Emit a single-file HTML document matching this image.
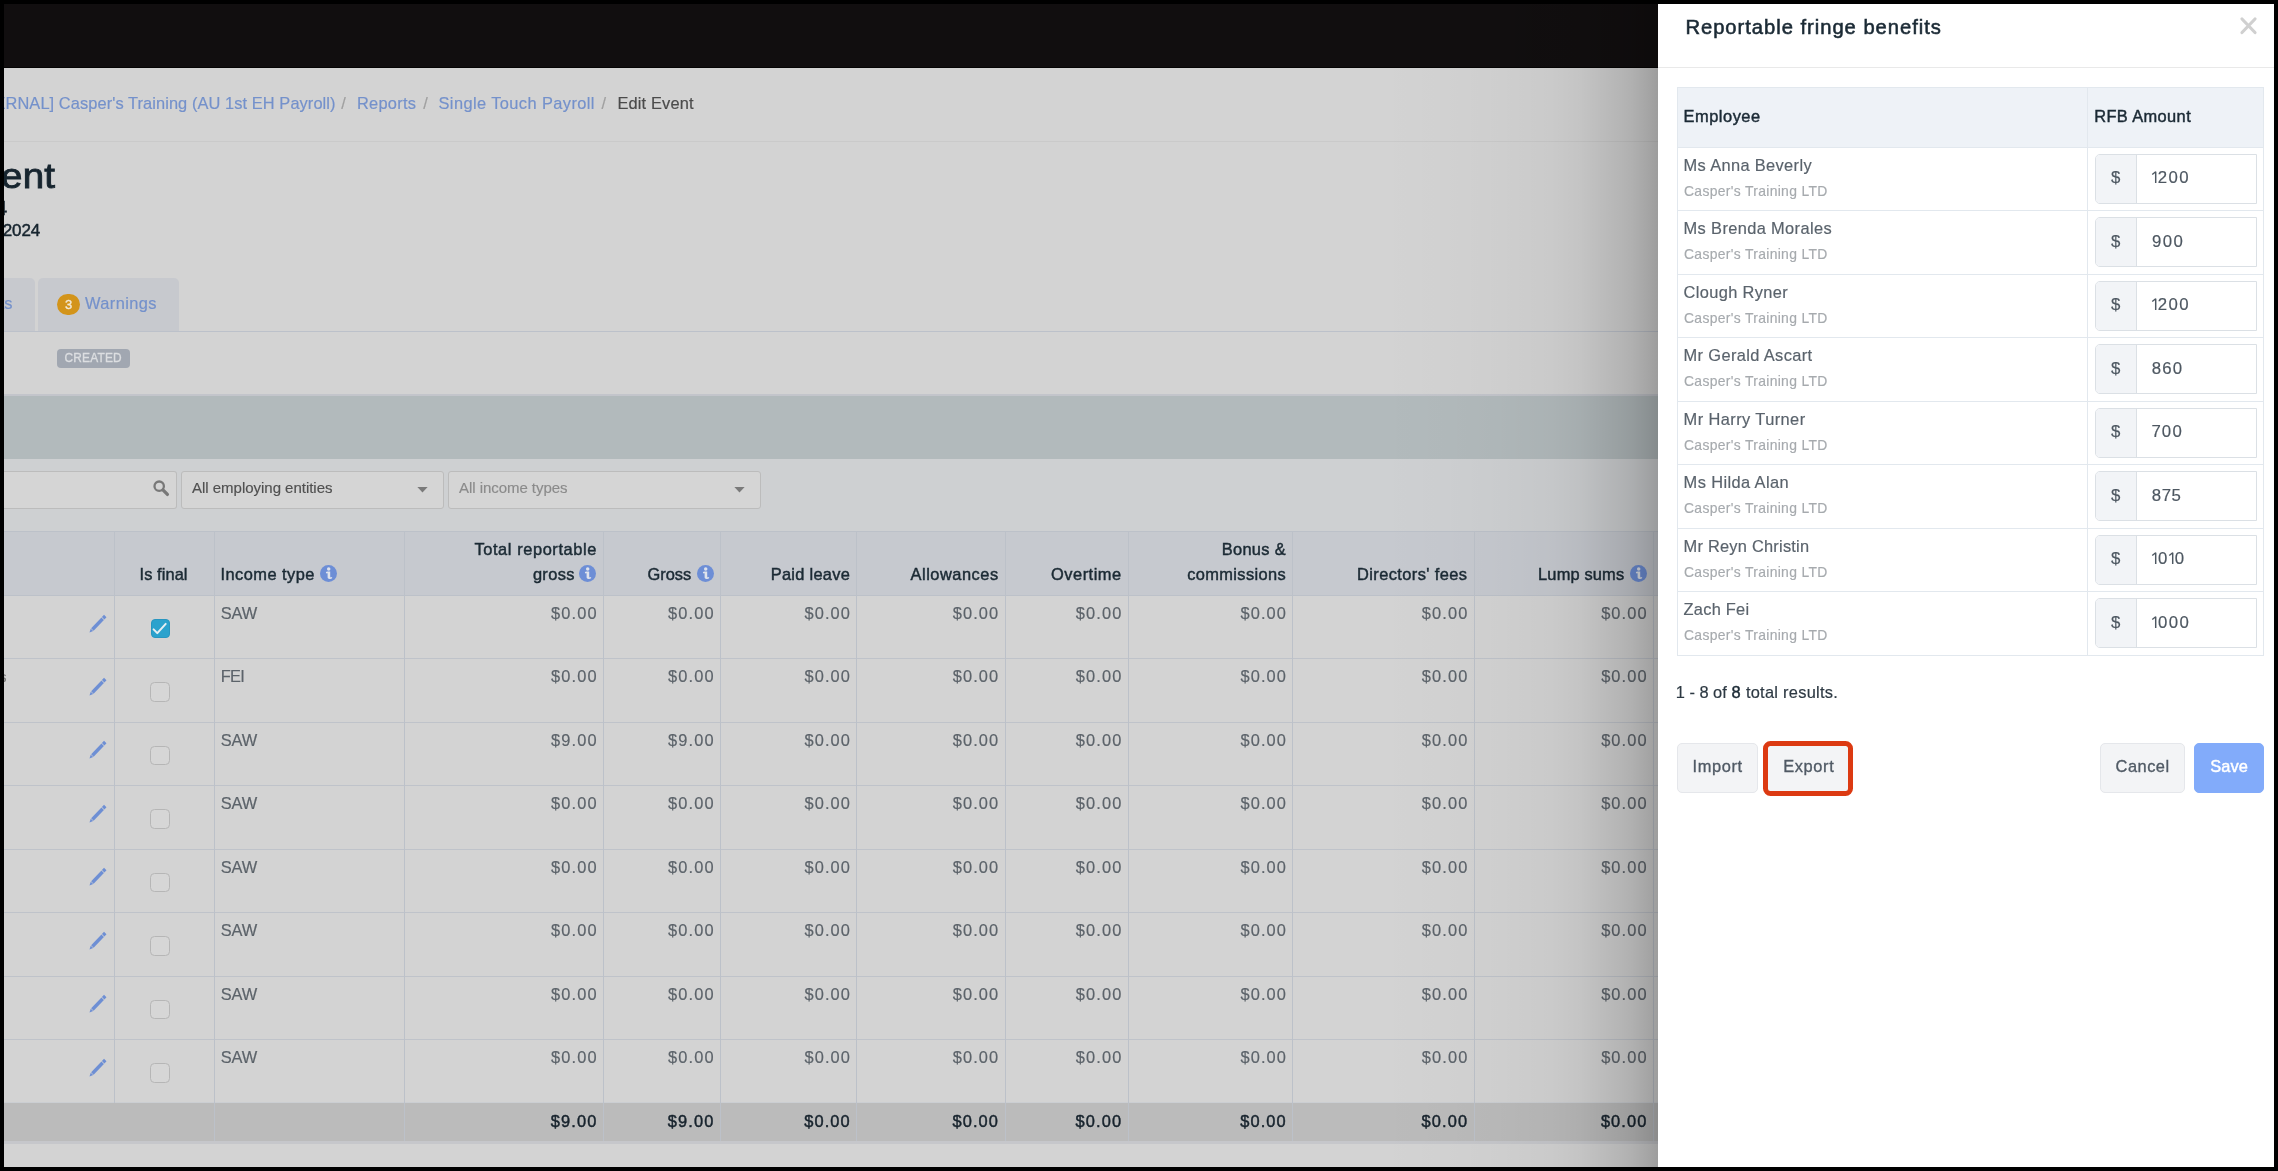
<!DOCTYPE html>
<html lang="en"><head><meta charset="utf-8"><title>Reportable fringe benefits</title>
<style>
html,body{margin:0;padding:0;}
body{width:2278px;height:1171px;background:#000;position:relative;font-family:"Liberation Sans", sans-serif;}
.a{position:absolute;box-sizing:border-box;}
.t{position:absolute;white-space:pre;line-height:1;font-family:"Liberation Sans", sans-serif;}
.ln{position:absolute;background:#c0c4cc;}
svg{position:absolute;overflow:visible;}
#app{position:absolute;left:0;top:0;width:2278px;height:1171px;overflow:hidden;will-change:transform;}
.d{display:inline-block;text-align:center;}
.tt{position:absolute;white-space:pre;line-height:1;}
</style></head><body>
<div id="app">
<div class="a" style="left:4px;top:4px;width:2270px;height:1163px;background:#d3d3d3;"></div>
<div class="a" style="left:4px;top:4px;width:2270px;height:64px;background:#110e0f;"></div>
<div class="a" style="left:4px;top:67px;width:2270px;height:1px;background:#050404;"></div>
<span class="t" style="top:95px;font-size:16.4px;color:#7491cb;-webkit-text-stroke:0.18px #7491cb;letter-spacing:0.083px;right:1942.42px;">ERNAL] Casper&#x27;s Training (AU 1st EH Payroll)</span>
<span class="t" style="top:95px;font-size:16.4px;color:#a0a0a0;-webkit-text-stroke:0.18px #a0a0a0;left:341.3px;">/</span>
<span class="t" style="top:95px;font-size:16.4px;color:#7491cb;-webkit-text-stroke:0.18px #7491cb;letter-spacing:0.266px;left:357px;">Reports</span>
<span class="t" style="top:95px;font-size:16.4px;color:#a0a0a0;-webkit-text-stroke:0.18px #a0a0a0;left:423.3px;">/</span>
<span class="t" style="top:95px;font-size:16.4px;color:#7491cb;-webkit-text-stroke:0.18px #7491cb;letter-spacing:0.410px;left:438.5px;">Single Touch Payroll</span>
<span class="t" style="top:95px;font-size:16.4px;color:#a0a0a0;-webkit-text-stroke:0.18px #a0a0a0;left:601.6px;">/</span>
<span class="t" style="top:95px;font-size:16.4px;color:#4b4b4b;-webkit-text-stroke:0.18px #4b4b4b;letter-spacing:0.142px;left:617.5px;">Edit Event</span>
<div class="a" style="left:4px;top:141px;width:1654px;height:1px;background:#cacaca;"></div>
<span class="t" style="top:158px;font-size:35px;color:#17252f;-webkit-text-stroke:0.91px #17252f;right:2222.86px;transform:scaleX(1.1);transform-origin:right bottom;letter-spacing:0.2px;">ent</span>
<span class="t" style="top:197px;font-size:21px;color:#17252f;-webkit-text-stroke:0.59px #17252f;right:2270.89px;">4</span>
<span class="t" style="top:222px;font-size:17px;color:#17252f;-webkit-text-stroke:0.48px #17252f;right:2237.84px;letter-spacing:-0.1px;">/2024</span>
<div class="a" style="left:4px;top:278px;width:31px;height:53px;background:#c7c9ce;border-radius:0 5px 0 0;"></div>
<div class="a" style="left:38px;top:278px;width:141px;height:53px;background:#c7c9ce;border-radius:5px 5px 0 0;"></div>
<div class="a" style="left:4px;top:331px;width:1654px;height:1px;background:#bcc1ca;"></div>
<span class="t" style="top:295px;font-size:16.4px;color:#7491cb;-webkit-text-stroke:0.18px #7491cb;right:2265.50px;">ts</span>
<div class="a" style="left:56.8px;top:294.4px;width:23.3px;height:21px;border-radius:10.5px;background:#d3941a;"></div>
<span class="t" style="top:298px;font-size:13px;color:#f3e9d4;-webkit-text-stroke:0.36px #f3e9d4;left:65.1px;">3</span>
<span class="t" style="top:295px;font-size:16.4px;color:#7491cb;-webkit-text-stroke:0.18px #7491cb;letter-spacing:0.411px;left:85px;">Warnings</span>
<div class="a" style="left:57px;top:349px;width:73px;height:19px;background:#a1a7b1;border-radius:4px;"></div>
<span class="t" style="top:353px;font-size:11.9px;color:#dcdee1;-webkit-text-stroke:0.33px #dcdee1;letter-spacing:0.177px;left:64.6px;">CREATED</span>
<div class="a" style="left:4px;top:394px;width:1654px;height:2px;background:#c3c5cb;"></div>
<div class="a" style="left:4px;top:396px;width:1654px;height:63px;background:#b2babc;"></div>
<div class="a" style="left:4px;top:459px;width:1654px;height:72.5px;background:#ced0d2;"></div>
<div class="a" style="left:4px;top:471px;width:173px;height:38px;border:1px solid #bcbcbc;border-left:none;border-radius:0 3px 3px 0;background:#d5d5d5;"></div>
<svg style="left:152px;top:479px" width="18" height="18" viewBox="0 0 18 18"><circle cx="7.2" cy="7.2" r="4.7" fill="none" stroke="#787878" stroke-width="2.3"/><path d="M10.9 10.9 L15.4 15.4" stroke="#787878" stroke-width="3.3" stroke-linecap="round"/></svg>
<div class="a" style="left:181px;top:471px;width:263px;height:38px;border:1px solid #bcbcbc;border-radius:3px;background:#d5d5d5;"></div>
<span class="t" style="top:480px;font-size:15.0px;color:#505050;-webkit-text-stroke:0.16px #505050;letter-spacing:-0.019px;left:192px;">All employing entities</span>
<svg style="left:416.6px;top:486.8px" width="11" height="6" viewBox="0 0 11 6"><path d="M0.4 0 H10.6 L5.5 5.4 Z" fill="#7a7a7a"/></svg>
<div class="a" style="left:448px;top:471px;width:313px;height:38px;border:1px solid #bcbcbc;border-radius:3px;background:#d5d5d5;"></div>
<span class="t" style="top:480px;font-size:15.0px;color:#8b8b8b;-webkit-text-stroke:0.16px #8b8b8b;letter-spacing:-0.048px;left:459px;">All income types</span>
<svg style="left:733.6px;top:486.8px" width="11" height="6" viewBox="0 0 11 6"><path d="M0.4 0 H10.6 L5.5 5.4 Z" fill="#7a7a7a"/></svg>
<div class="a" style="left:4px;top:531px;width:1654px;height:64.5px;background:#c6c9cf;"></div>
<div class="a" style="left:4px;top:531px;width:1654px;height:1px;background:#bcc1c9;"></div>
<div class="a" style="left:4px;top:595px;width:1654px;height:1px;background:#bcc1c9;"></div>
<div class="a" style="left:4px;top:1103px;width:1654px;height:38px;background:#bbbbbb;"></div>
<div class="a" style="left:4px;top:1141px;width:1654px;height:3px;background:#c6c7cb;"></div>
<div class="a" style="left:4px;top:658px;width:1654px;height:1px;background:#bfc3ca;"></div>
<div class="a" style="left:4px;top:722px;width:1654px;height:1px;background:#bfc3ca;"></div>
<div class="a" style="left:4px;top:785px;width:1654px;height:1px;background:#bfc3ca;"></div>
<div class="a" style="left:4px;top:849px;width:1654px;height:1px;background:#bfc3ca;"></div>
<div class="a" style="left:4px;top:912px;width:1654px;height:1px;background:#bfc3ca;"></div>
<div class="a" style="left:4px;top:976px;width:1654px;height:1px;background:#bfc3ca;"></div>
<div class="a" style="left:4px;top:1039px;width:1654px;height:1px;background:#bfc3ca;"></div>
<div class="a" style="left:4px;top:1102px;width:1654px;height:1px;background:#cbced2;"></div>
<div class="a" style="left:114px;top:531px;width:1px;height:572px;background:#bcc1c9;"></div>
<div class="a" style="left:214px;top:531px;width:1px;height:610px;background:#bcc1c9;"></div>
<div class="a" style="left:404px;top:531px;width:1px;height:610px;background:#bcc1c9;"></div>
<div class="a" style="left:603px;top:531px;width:1px;height:610px;background:#bcc1c9;"></div>
<div class="a" style="left:720px;top:531px;width:1px;height:610px;background:#bcc1c9;"></div>
<div class="a" style="left:856px;top:531px;width:1px;height:610px;background:#bcc1c9;"></div>
<div class="a" style="left:1005px;top:531px;width:1px;height:610px;background:#bcc1c9;"></div>
<div class="a" style="left:1128px;top:531px;width:1px;height:610px;background:#bcc1c9;"></div>
<div class="a" style="left:1292px;top:531px;width:1px;height:610px;background:#bcc1c9;"></div>
<div class="a" style="left:1474px;top:531px;width:1px;height:610px;background:#bcc1c9;"></div>
<div class="a" style="left:1653px;top:531px;width:1px;height:610px;background:#bcc1c9;"></div>
<span class="t" style="top:566px;font-size:16.4px;color:#1b2a34;-webkit-text-stroke:0.46px #1b2a34;letter-spacing:0.089px;left:139.5px;">Is final</span>
<span class="t" style="top:566px;font-size:16.4px;color:#1b2a34;-webkit-text-stroke:0.46px #1b2a34;letter-spacing:0.470px;left:220.5px;">Income type</span>
<svg style="left:320.1px;top:564.9px" width="17" height="17" viewBox="0 0 17 17"><circle cx="8.5" cy="8.5" r="8.5" fill="#6d8ed6"/><circle cx="8.7" cy="4.1" r="1.75" fill="#dfe3ec"/><path d="M5.9 7.0 C7.2 6.6 8.6 6.5 10.2 6.6 L10.2 11.6 C10.2 12.6 10.9 12.6 11.9 12.0 L12.3 12.9 C10.9 14.1 7.6 14.6 7.6 12.2 L7.6 8.3 C7.1 8.2 6.6 8.3 6.1 8.4 Z" fill="#dfe3ec"/></svg>
<span class="t" style="top:541px;font-size:16.4px;color:#1b2a34;-webkit-text-stroke:0.46px #1b2a34;letter-spacing:0.601px;right:1681.03px;">Total reportable</span>
<span class="t" style="top:566px;font-size:16.4px;color:#1b2a34;-webkit-text-stroke:0.46px #1b2a34;letter-spacing:0.352px;right:1703.28px;">gross</span>
<svg style="left:579.3px;top:564.9px" width="17" height="17" viewBox="0 0 17 17"><circle cx="8.5" cy="8.5" r="8.5" fill="#6d8ed6"/><circle cx="8.7" cy="4.1" r="1.75" fill="#dfe3ec"/><path d="M5.9 7.0 C7.2 6.6 8.6 6.5 10.2 6.6 L10.2 11.6 C10.2 12.6 10.9 12.6 11.9 12.0 L12.3 12.9 C10.9 14.1 7.6 14.6 7.6 12.2 L7.6 8.3 C7.1 8.2 6.6 8.3 6.1 8.4 Z" fill="#dfe3ec"/></svg>
<span class="t" style="top:566px;font-size:16.4px;color:#1b2a34;-webkit-text-stroke:0.46px #1b2a34;letter-spacing:-0.055px;right:1586.98px;">Gross</span>
<svg style="left:696.5px;top:564.9px" width="17" height="17" viewBox="0 0 17 17"><circle cx="8.5" cy="8.5" r="8.5" fill="#6d8ed6"/><circle cx="8.7" cy="4.1" r="1.75" fill="#dfe3ec"/><path d="M5.9 7.0 C7.2 6.6 8.6 6.5 10.2 6.6 L10.2 11.6 C10.2 12.6 10.9 12.6 11.9 12.0 L12.3 12.9 C10.9 14.1 7.6 14.6 7.6 12.2 L7.6 8.3 C7.1 8.2 6.6 8.3 6.1 8.4 Z" fill="#dfe3ec"/></svg>
<span class="t" style="top:566px;font-size:16.4px;color:#1b2a34;-webkit-text-stroke:0.46px #1b2a34;letter-spacing:0.273px;right:1427.96px;">Paid leave</span>
<span class="t" style="top:566px;font-size:16.4px;color:#1b2a34;-webkit-text-stroke:0.46px #1b2a34;letter-spacing:0.510px;right:1279.42px;">Allowances</span>
<span class="t" style="top:566px;font-size:16.4px;color:#1b2a34;-webkit-text-stroke:0.46px #1b2a34;letter-spacing:0.502px;right:1156.43px;">Overtime</span>
<span class="t" style="top:541px;font-size:16.4px;color:#1b2a34;-webkit-text-stroke:0.46px #1b2a34;letter-spacing:0.339px;right:991.99px;">Bonus &amp;</span>
<span class="t" style="top:566px;font-size:16.4px;color:#1b2a34;-webkit-text-stroke:0.46px #1b2a34;letter-spacing:0.378px;right:991.95px;">commissions</span>
<span class="t" style="top:566px;font-size:16.4px;color:#1b2a34;-webkit-text-stroke:0.46px #1b2a34;letter-spacing:0.412px;right:810.52px;">Directors&#x27; fees</span>
<span class="t" style="top:566px;font-size:16.4px;color:#1b2a34;-webkit-text-stroke:0.46px #1b2a34;letter-spacing:0.160px;right:653.77px;">Lump sums</span>
<svg style="left:1629.9px;top:564.9px" width="17" height="17" viewBox="0 0 17 17"><circle cx="8.5" cy="8.5" r="8.5" fill="#6d8ed6"/><circle cx="8.7" cy="4.1" r="1.75" fill="#dfe3ec"/><path d="M5.9 7.0 C7.2 6.6 8.6 6.5 10.2 6.6 L10.2 11.6 C10.2 12.6 10.9 12.6 11.9 12.0 L12.3 12.9 C10.9 14.1 7.6 14.6 7.6 12.2 L7.6 8.3 C7.1 8.2 6.6 8.3 6.1 8.4 Z" fill="#dfe3ec"/></svg>
<svg style="left:89.3px;top:614.5px" width="18" height="18" viewBox="0 0 18 18"><path d="M15.02 -0.13L17.48 2.23L15.40 4.39L12.95 2.04zM12.46 2.55L14.92 4.90L4.61 15.66L2.16 13.31zM1.74 13.74L4.20 16.09L0.50 17.50z" fill="#6e8fd4"/></svg>
<div class="a" style="left:150.6px;top:618.6px;width:19px;height:19px;border-radius:4px;background:#2ba2cd;border:1px solid #2896c0;"></div>
<svg style="left:150.6px;top:618.6px" width="19" height="19" viewBox="0 0 19 19"><path d="M2.6 10.4l3.7 3.7 8.4-9.2" fill="none" stroke="#e6eef2" stroke-width="2" stroke-linecap="round" stroke-linejoin="round"/></svg>
<span class="t" style="top:605px;font-size:16.4px;color:#5c636a;-webkit-text-stroke:0.18px #5c636a;letter-spacing:-0.117px;left:220.8px;">SAW</span>
<span class="t" style="top:605px;font-size:16.4px;color:#5c636a;-webkit-text-stroke:0.18px #5c636a;letter-spacing:1.117px;right:1680.38px;">$0.00</span>
<span class="t" style="top:605px;font-size:16.4px;color:#5c636a;-webkit-text-stroke:0.18px #5c636a;letter-spacing:1.117px;right:1563.38px;">$0.00</span>
<span class="t" style="top:605px;font-size:16.4px;color:#5c636a;-webkit-text-stroke:0.18px #5c636a;letter-spacing:1.117px;right:1426.98px;">$0.00</span>
<span class="t" style="top:605px;font-size:16.4px;color:#5c636a;-webkit-text-stroke:0.18px #5c636a;letter-spacing:1.117px;right:1278.68px;">$0.00</span>
<span class="t" style="top:605px;font-size:16.4px;color:#5c636a;-webkit-text-stroke:0.18px #5c636a;letter-spacing:1.117px;right:1155.58px;">$0.00</span>
<span class="t" style="top:605px;font-size:16.4px;color:#5c636a;-webkit-text-stroke:0.18px #5c636a;letter-spacing:1.117px;right:990.98px;">$0.00</span>
<span class="t" style="top:605px;font-size:16.4px;color:#5c636a;-webkit-text-stroke:0.18px #5c636a;letter-spacing:1.117px;right:809.58px;">$0.00</span>
<span class="t" style="top:605px;font-size:16.4px;color:#5c636a;-webkit-text-stroke:0.18px #5c636a;letter-spacing:1.117px;right:630.28px;">$0.00</span>
<svg style="left:89.3px;top:678.0px" width="18" height="18" viewBox="0 0 18 18"><path d="M15.02 -0.13L17.48 2.23L15.40 4.39L12.95 2.04zM12.46 2.55L14.92 4.90L4.61 15.66L2.16 13.31zM1.74 13.74L4.20 16.09L0.50 17.50z" fill="#6e8fd4"/></svg>
<div class="a" style="left:150.2px;top:682.4px;width:19.5px;height:19.5px;border-radius:4.5px;background:#d6d6d6;border:1px solid #b6b6b6;"></div>
<span class="t" style="top:668px;font-size:16.4px;color:#5c636a;-webkit-text-stroke:0.18px #5c636a;letter-spacing:-0.750px;left:220.8px;">FEI</span>
<span class="t" style="top:668px;font-size:16.4px;color:#5c636a;-webkit-text-stroke:0.18px #5c636a;letter-spacing:1.117px;right:1680.38px;">$0.00</span>
<span class="t" style="top:668px;font-size:16.4px;color:#5c636a;-webkit-text-stroke:0.18px #5c636a;letter-spacing:1.117px;right:1563.38px;">$0.00</span>
<span class="t" style="top:668px;font-size:16.4px;color:#5c636a;-webkit-text-stroke:0.18px #5c636a;letter-spacing:1.117px;right:1426.98px;">$0.00</span>
<span class="t" style="top:668px;font-size:16.4px;color:#5c636a;-webkit-text-stroke:0.18px #5c636a;letter-spacing:1.117px;right:1278.68px;">$0.00</span>
<span class="t" style="top:668px;font-size:16.4px;color:#5c636a;-webkit-text-stroke:0.18px #5c636a;letter-spacing:1.117px;right:1155.58px;">$0.00</span>
<span class="t" style="top:668px;font-size:16.4px;color:#5c636a;-webkit-text-stroke:0.18px #5c636a;letter-spacing:1.117px;right:990.98px;">$0.00</span>
<span class="t" style="top:668px;font-size:16.4px;color:#5c636a;-webkit-text-stroke:0.18px #5c636a;letter-spacing:1.117px;right:809.58px;">$0.00</span>
<span class="t" style="top:668px;font-size:16.4px;color:#5c636a;-webkit-text-stroke:0.18px #5c636a;letter-spacing:1.117px;right:630.28px;">$0.00</span>
<svg style="left:89.3px;top:741.4px" width="18" height="18" viewBox="0 0 18 18"><path d="M15.02 -0.13L17.48 2.23L15.40 4.39L12.95 2.04zM12.46 2.55L14.92 4.90L4.61 15.66L2.16 13.31zM1.74 13.74L4.20 16.09L0.50 17.50z" fill="#6e8fd4"/></svg>
<div class="a" style="left:150.2px;top:745.8px;width:19.5px;height:19.5px;border-radius:4.5px;background:#d6d6d6;border:1px solid #b6b6b6;"></div>
<span class="t" style="top:732px;font-size:16.4px;color:#5c636a;-webkit-text-stroke:0.18px #5c636a;letter-spacing:-0.117px;left:220.8px;">SAW</span>
<span class="t" style="top:732px;font-size:16.4px;color:#5c636a;-webkit-text-stroke:0.18px #5c636a;letter-spacing:1.117px;right:1680.38px;">$9.00</span>
<span class="t" style="top:732px;font-size:16.4px;color:#5c636a;-webkit-text-stroke:0.18px #5c636a;letter-spacing:1.117px;right:1563.38px;">$9.00</span>
<span class="t" style="top:732px;font-size:16.4px;color:#5c636a;-webkit-text-stroke:0.18px #5c636a;letter-spacing:1.117px;right:1426.98px;">$0.00</span>
<span class="t" style="top:732px;font-size:16.4px;color:#5c636a;-webkit-text-stroke:0.18px #5c636a;letter-spacing:1.117px;right:1278.68px;">$0.00</span>
<span class="t" style="top:732px;font-size:16.4px;color:#5c636a;-webkit-text-stroke:0.18px #5c636a;letter-spacing:1.117px;right:1155.58px;">$0.00</span>
<span class="t" style="top:732px;font-size:16.4px;color:#5c636a;-webkit-text-stroke:0.18px #5c636a;letter-spacing:1.117px;right:990.98px;">$0.00</span>
<span class="t" style="top:732px;font-size:16.4px;color:#5c636a;-webkit-text-stroke:0.18px #5c636a;letter-spacing:1.117px;right:809.58px;">$0.00</span>
<span class="t" style="top:732px;font-size:16.4px;color:#5c636a;-webkit-text-stroke:0.18px #5c636a;letter-spacing:1.117px;right:630.28px;">$0.00</span>
<svg style="left:89.3px;top:804.9px" width="18" height="18" viewBox="0 0 18 18"><path d="M15.02 -0.13L17.48 2.23L15.40 4.39L12.95 2.04zM12.46 2.55L14.92 4.90L4.61 15.66L2.16 13.31zM1.74 13.74L4.20 16.09L0.50 17.50z" fill="#6e8fd4"/></svg>
<div class="a" style="left:150.2px;top:809.3px;width:19.5px;height:19.5px;border-radius:4.5px;background:#d6d6d6;border:1px solid #b6b6b6;"></div>
<span class="t" style="top:795px;font-size:16.4px;color:#5c636a;-webkit-text-stroke:0.18px #5c636a;letter-spacing:-0.117px;left:220.8px;">SAW</span>
<span class="t" style="top:795px;font-size:16.4px;color:#5c636a;-webkit-text-stroke:0.18px #5c636a;letter-spacing:1.117px;right:1680.38px;">$0.00</span>
<span class="t" style="top:795px;font-size:16.4px;color:#5c636a;-webkit-text-stroke:0.18px #5c636a;letter-spacing:1.117px;right:1563.38px;">$0.00</span>
<span class="t" style="top:795px;font-size:16.4px;color:#5c636a;-webkit-text-stroke:0.18px #5c636a;letter-spacing:1.117px;right:1426.98px;">$0.00</span>
<span class="t" style="top:795px;font-size:16.4px;color:#5c636a;-webkit-text-stroke:0.18px #5c636a;letter-spacing:1.117px;right:1278.68px;">$0.00</span>
<span class="t" style="top:795px;font-size:16.4px;color:#5c636a;-webkit-text-stroke:0.18px #5c636a;letter-spacing:1.117px;right:1155.58px;">$0.00</span>
<span class="t" style="top:795px;font-size:16.4px;color:#5c636a;-webkit-text-stroke:0.18px #5c636a;letter-spacing:1.117px;right:990.98px;">$0.00</span>
<span class="t" style="top:795px;font-size:16.4px;color:#5c636a;-webkit-text-stroke:0.18px #5c636a;letter-spacing:1.117px;right:809.58px;">$0.00</span>
<span class="t" style="top:795px;font-size:16.4px;color:#5c636a;-webkit-text-stroke:0.18px #5c636a;letter-spacing:1.117px;right:630.28px;">$0.00</span>
<svg style="left:89.3px;top:868.3px" width="18" height="18" viewBox="0 0 18 18"><path d="M15.02 -0.13L17.48 2.23L15.40 4.39L12.95 2.04zM12.46 2.55L14.92 4.90L4.61 15.66L2.16 13.31zM1.74 13.74L4.20 16.09L0.50 17.50z" fill="#6e8fd4"/></svg>
<div class="a" style="left:150.2px;top:872.7px;width:19.5px;height:19.5px;border-radius:4.5px;background:#d6d6d6;border:1px solid #b6b6b6;"></div>
<span class="t" style="top:859px;font-size:16.4px;color:#5c636a;-webkit-text-stroke:0.18px #5c636a;letter-spacing:-0.117px;left:220.8px;">SAW</span>
<span class="t" style="top:859px;font-size:16.4px;color:#5c636a;-webkit-text-stroke:0.18px #5c636a;letter-spacing:1.117px;right:1680.38px;">$0.00</span>
<span class="t" style="top:859px;font-size:16.4px;color:#5c636a;-webkit-text-stroke:0.18px #5c636a;letter-spacing:1.117px;right:1563.38px;">$0.00</span>
<span class="t" style="top:859px;font-size:16.4px;color:#5c636a;-webkit-text-stroke:0.18px #5c636a;letter-spacing:1.117px;right:1426.98px;">$0.00</span>
<span class="t" style="top:859px;font-size:16.4px;color:#5c636a;-webkit-text-stroke:0.18px #5c636a;letter-spacing:1.117px;right:1278.68px;">$0.00</span>
<span class="t" style="top:859px;font-size:16.4px;color:#5c636a;-webkit-text-stroke:0.18px #5c636a;letter-spacing:1.117px;right:1155.58px;">$0.00</span>
<span class="t" style="top:859px;font-size:16.4px;color:#5c636a;-webkit-text-stroke:0.18px #5c636a;letter-spacing:1.117px;right:990.98px;">$0.00</span>
<span class="t" style="top:859px;font-size:16.4px;color:#5c636a;-webkit-text-stroke:0.18px #5c636a;letter-spacing:1.117px;right:809.58px;">$0.00</span>
<span class="t" style="top:859px;font-size:16.4px;color:#5c636a;-webkit-text-stroke:0.18px #5c636a;letter-spacing:1.117px;right:630.28px;">$0.00</span>
<svg style="left:89.3px;top:931.8px" width="18" height="18" viewBox="0 0 18 18"><path d="M15.02 -0.13L17.48 2.23L15.40 4.39L12.95 2.04zM12.46 2.55L14.92 4.90L4.61 15.66L2.16 13.31zM1.74 13.74L4.20 16.09L0.50 17.50z" fill="#6e8fd4"/></svg>
<div class="a" style="left:150.2px;top:936.2px;width:19.5px;height:19.5px;border-radius:4.5px;background:#d6d6d6;border:1px solid #b6b6b6;"></div>
<span class="t" style="top:922px;font-size:16.4px;color:#5c636a;-webkit-text-stroke:0.18px #5c636a;letter-spacing:-0.117px;left:220.8px;">SAW</span>
<span class="t" style="top:922px;font-size:16.4px;color:#5c636a;-webkit-text-stroke:0.18px #5c636a;letter-spacing:1.117px;right:1680.38px;">$0.00</span>
<span class="t" style="top:922px;font-size:16.4px;color:#5c636a;-webkit-text-stroke:0.18px #5c636a;letter-spacing:1.117px;right:1563.38px;">$0.00</span>
<span class="t" style="top:922px;font-size:16.4px;color:#5c636a;-webkit-text-stroke:0.18px #5c636a;letter-spacing:1.117px;right:1426.98px;">$0.00</span>
<span class="t" style="top:922px;font-size:16.4px;color:#5c636a;-webkit-text-stroke:0.18px #5c636a;letter-spacing:1.117px;right:1278.68px;">$0.00</span>
<span class="t" style="top:922px;font-size:16.4px;color:#5c636a;-webkit-text-stroke:0.18px #5c636a;letter-spacing:1.117px;right:1155.58px;">$0.00</span>
<span class="t" style="top:922px;font-size:16.4px;color:#5c636a;-webkit-text-stroke:0.18px #5c636a;letter-spacing:1.117px;right:990.98px;">$0.00</span>
<span class="t" style="top:922px;font-size:16.4px;color:#5c636a;-webkit-text-stroke:0.18px #5c636a;letter-spacing:1.117px;right:809.58px;">$0.00</span>
<span class="t" style="top:922px;font-size:16.4px;color:#5c636a;-webkit-text-stroke:0.18px #5c636a;letter-spacing:1.117px;right:630.28px;">$0.00</span>
<svg style="left:89.3px;top:995.3px" width="18" height="18" viewBox="0 0 18 18"><path d="M15.02 -0.13L17.48 2.23L15.40 4.39L12.95 2.04zM12.46 2.55L14.92 4.90L4.61 15.66L2.16 13.31zM1.74 13.74L4.20 16.09L0.50 17.50z" fill="#6e8fd4"/></svg>
<div class="a" style="left:150.2px;top:999.7px;width:19.5px;height:19.5px;border-radius:4.5px;background:#d6d6d6;border:1px solid #b6b6b6;"></div>
<span class="t" style="top:986px;font-size:16.4px;color:#5c636a;-webkit-text-stroke:0.18px #5c636a;letter-spacing:-0.117px;left:220.8px;">SAW</span>
<span class="t" style="top:986px;font-size:16.4px;color:#5c636a;-webkit-text-stroke:0.18px #5c636a;letter-spacing:1.117px;right:1680.38px;">$0.00</span>
<span class="t" style="top:986px;font-size:16.4px;color:#5c636a;-webkit-text-stroke:0.18px #5c636a;letter-spacing:1.117px;right:1563.38px;">$0.00</span>
<span class="t" style="top:986px;font-size:16.4px;color:#5c636a;-webkit-text-stroke:0.18px #5c636a;letter-spacing:1.117px;right:1426.98px;">$0.00</span>
<span class="t" style="top:986px;font-size:16.4px;color:#5c636a;-webkit-text-stroke:0.18px #5c636a;letter-spacing:1.117px;right:1278.68px;">$0.00</span>
<span class="t" style="top:986px;font-size:16.4px;color:#5c636a;-webkit-text-stroke:0.18px #5c636a;letter-spacing:1.117px;right:1155.58px;">$0.00</span>
<span class="t" style="top:986px;font-size:16.4px;color:#5c636a;-webkit-text-stroke:0.18px #5c636a;letter-spacing:1.117px;right:990.98px;">$0.00</span>
<span class="t" style="top:986px;font-size:16.4px;color:#5c636a;-webkit-text-stroke:0.18px #5c636a;letter-spacing:1.117px;right:809.58px;">$0.00</span>
<span class="t" style="top:986px;font-size:16.4px;color:#5c636a;-webkit-text-stroke:0.18px #5c636a;letter-spacing:1.117px;right:630.28px;">$0.00</span>
<svg style="left:89.3px;top:1058.7px" width="18" height="18" viewBox="0 0 18 18"><path d="M15.02 -0.13L17.48 2.23L15.40 4.39L12.95 2.04zM12.46 2.55L14.92 4.90L4.61 15.66L2.16 13.31zM1.74 13.74L4.20 16.09L0.50 17.50z" fill="#6e8fd4"/></svg>
<div class="a" style="left:150.2px;top:1063.1px;width:19.5px;height:19.5px;border-radius:4.5px;background:#d6d6d6;border:1px solid #b6b6b6;"></div>
<span class="t" style="top:1049px;font-size:16.4px;color:#5c636a;-webkit-text-stroke:0.18px #5c636a;letter-spacing:-0.117px;left:220.8px;">SAW</span>
<span class="t" style="top:1049px;font-size:16.4px;color:#5c636a;-webkit-text-stroke:0.18px #5c636a;letter-spacing:1.117px;right:1680.38px;">$0.00</span>
<span class="t" style="top:1049px;font-size:16.4px;color:#5c636a;-webkit-text-stroke:0.18px #5c636a;letter-spacing:1.117px;right:1563.38px;">$0.00</span>
<span class="t" style="top:1049px;font-size:16.4px;color:#5c636a;-webkit-text-stroke:0.18px #5c636a;letter-spacing:1.117px;right:1426.98px;">$0.00</span>
<span class="t" style="top:1049px;font-size:16.4px;color:#5c636a;-webkit-text-stroke:0.18px #5c636a;letter-spacing:1.117px;right:1278.68px;">$0.00</span>
<span class="t" style="top:1049px;font-size:16.4px;color:#5c636a;-webkit-text-stroke:0.18px #5c636a;letter-spacing:1.117px;right:1155.58px;">$0.00</span>
<span class="t" style="top:1049px;font-size:16.4px;color:#5c636a;-webkit-text-stroke:0.18px #5c636a;letter-spacing:1.117px;right:990.98px;">$0.00</span>
<span class="t" style="top:1049px;font-size:16.4px;color:#5c636a;-webkit-text-stroke:0.18px #5c636a;letter-spacing:1.117px;right:809.58px;">$0.00</span>
<span class="t" style="top:1049px;font-size:16.4px;color:#5c636a;-webkit-text-stroke:0.18px #5c636a;letter-spacing:1.117px;right:630.28px;">$0.00</span>
<span class="t" style="top:1113px;font-size:16.4px;color:#17232d;-webkit-text-stroke:0.46px #17232d;letter-spacing:1.117px;right:1680.61px;">$9.00</span>
<span class="t" style="top:1113px;font-size:16.4px;color:#17232d;-webkit-text-stroke:0.46px #17232d;letter-spacing:1.117px;right:1563.61px;">$9.00</span>
<span class="t" style="top:1113px;font-size:16.4px;color:#17232d;-webkit-text-stroke:0.46px #17232d;letter-spacing:1.117px;right:1427.21px;">$0.00</span>
<span class="t" style="top:1113px;font-size:16.4px;color:#17232d;-webkit-text-stroke:0.46px #17232d;letter-spacing:1.117px;right:1278.91px;">$0.00</span>
<span class="t" style="top:1113px;font-size:16.4px;color:#17232d;-webkit-text-stroke:0.46px #17232d;letter-spacing:1.117px;right:1155.81px;">$0.00</span>
<span class="t" style="top:1113px;font-size:16.4px;color:#17232d;-webkit-text-stroke:0.46px #17232d;letter-spacing:1.117px;right:991.21px;">$0.00</span>
<span class="t" style="top:1113px;font-size:16.4px;color:#17232d;-webkit-text-stroke:0.46px #17232d;letter-spacing:1.117px;right:809.81px;">$0.00</span>
<span class="t" style="top:1113px;font-size:16.4px;color:#17232d;-webkit-text-stroke:0.46px #17232d;letter-spacing:1.117px;right:630.51px;">$0.00</span>
<span class="t" style="top:669px;font-size:15px;color:#777;-webkit-text-stroke:0.16px #777;right:2271.50px;">s</span>
<div class="a" style="left:1380px;top:4px;width:278px;height:1163px;background:linear-gradient(to right,rgba(0,0,0,0) 0.0%,rgba(0,0,0,0.01) 25.2%,rgba(0,0,0,0.024) 43.2%,rgba(0,0,0,0.042) 61.5%,rgba(0,0,0,0.07) 71.9%,rgba(0,0,0,0.11) 79.9%,rgba(0,0,0,0.14) 86.3%,rgba(0,0,0,0.17) 91.0%,rgba(0,0,0,0.21) 95.7%,rgba(0,0,0,0.255) 100.0%);"></div>
<div class="a" style="left:1658px;top:4px;width:616px;height:1163px;background:#ffffff;"></div>
<span class="t" style="top:17px;font-size:20.2px;color:#1b2a35;-webkit-text-stroke:0.57px #1b2a35;letter-spacing:0.973px;left:1685.4px;">Reportable fringe benefits</span>
<svg style="left:2240.3px;top:17px" width="17" height="17.5" viewBox="0 0 17 17.5"><path d="M2 2L15 15.5M15 2L2 15.5" stroke="#d0d0d0" stroke-width="3.2" stroke-linecap="round" fill="none"/></svg>
<div class="a" style="left:1658px;top:67px;width:616px;height:1px;background:#e9e9e9;"></div>
<div class="a" style="left:1677px;top:87px;width:587px;height:60px;background:#eef2f7;"></div>
<div class="a" style="left:1677px;top:87px;width:587px;height:1px;background:#e2e8ee;"></div>
<div class="a" style="left:1677px;top:87px;width:1px;height:569px;background:#e2e8ee;"></div>
<div class="a" style="left:2263px;top:87px;width:1px;height:569px;background:#e2e8ee;"></div>
<div class="a" style="left:2087px;top:87px;width:1px;height:569px;background:#e2e8ee;"></div>
<div class="a" style="left:1677px;top:147px;width:587px;height:1px;background:#e2e8ee;"></div>
<div class="a" style="left:1677px;top:210px;width:587px;height:1px;background:#e2e8ee;"></div>
<div class="a" style="left:1677px;top:274px;width:587px;height:1px;background:#e2e8ee;"></div>
<div class="a" style="left:1677px;top:337px;width:587px;height:1px;background:#e2e8ee;"></div>
<div class="a" style="left:1677px;top:401px;width:587px;height:1px;background:#e2e8ee;"></div>
<div class="a" style="left:1677px;top:464px;width:587px;height:1px;background:#e2e8ee;"></div>
<div class="a" style="left:1677px;top:528px;width:587px;height:1px;background:#e2e8ee;"></div>
<div class="a" style="left:1677px;top:591px;width:587px;height:1px;background:#e2e8ee;"></div>
<div class="a" style="left:1677px;top:655px;width:587px;height:1px;background:#e2e8ee;"></div>
<span class="t" style="top:108px;font-size:16.4px;color:#1b2a35;-webkit-text-stroke:0.46px #1b2a35;letter-spacing:0.516px;left:1683.6px;">Employee</span>
<span class="t" style="top:108px;font-size:16.4px;color:#1b2a35;-webkit-text-stroke:0.46px #1b2a35;letter-spacing:0.398px;left:2094.2px;">RFB Amount</span>
<span class="t" style="top:157px;font-size:16.4px;color:#5a636c;-webkit-text-stroke:0.18px #5a636c;letter-spacing:0.357px;left:1683.6px;">Ms Anna Beverly</span>
<span class="t" style="top:185px;font-size:13.9px;color:#a6aaae;-webkit-text-stroke:0.15px #a6aaae;letter-spacing:0.328px;left:1684px;">Casper&#x27;s Training LTD</span>
<div class="a" style="left:2095px;top:153.8px;width:162px;height:50px;border:1px solid #dbe0e5;border-radius:5px 0 0 5px;background:#fff;"></div>
<div class="a" style="left:2096px;top:154.8px;width:41px;height:48px;border-right:1px solid #dbe0e5;border-radius:4px 0 0 4px;background:#f2f4f7;"></div>
<span class="t" style="top:170px;font-size:16.8px;color:#4d5761;-webkit-text-stroke:0.18px #4d5761;left:2111.1px;">$</span>
<span class="tt" style="left:2151.4px;top:170px;font-size:16.8px;color:#4d5761;-webkit-text-stroke:0.18px #4d5761;"><span class="d" style="width:6.0px;height:12px;position:relative;"><svg style="left:0;top:0" width="6" height="12" viewBox="0 0 6 12"><path d="M1.25 3.45L4.7 0.75V12" fill="none" stroke="#4d5761" stroke-width="1.45" stroke-linejoin="bevel"/></svg></span><span class="d" style="width:10.3px;">2</span><span class="d" style="width:10.75px;">0</span><span class="d" style="width:10.75px;">0</span></span>
<span class="t" style="top:220px;font-size:16.4px;color:#5a636c;-webkit-text-stroke:0.18px #5a636c;letter-spacing:0.368px;left:1683.6px;">Ms Brenda Morales</span>
<span class="t" style="top:248px;font-size:13.9px;color:#a6aaae;-webkit-text-stroke:0.15px #a6aaae;letter-spacing:0.328px;left:1684px;">Casper&#x27;s Training LTD</span>
<div class="a" style="left:2095px;top:217.3px;width:162px;height:50px;border:1px solid #dbe0e5;border-radius:5px 0 0 5px;background:#fff;"></div>
<div class="a" style="left:2096px;top:218.3px;width:41px;height:48px;border-right:1px solid #dbe0e5;border-radius:4px 0 0 4px;background:#f2f4f7;"></div>
<span class="t" style="top:234px;font-size:16.8px;color:#4d5761;-webkit-text-stroke:0.18px #4d5761;left:2111.1px;">$</span>
<span class="tt" style="left:2151.4px;top:234px;font-size:16.8px;color:#4d5761;-webkit-text-stroke:0.18px #4d5761;"><span class="d" style="width:10.6px;">9</span><span class="d" style="width:10.75px;">0</span><span class="d" style="width:10.75px;">0</span></span>
<span class="t" style="top:284px;font-size:16.4px;color:#5a636c;-webkit-text-stroke:0.18px #5a636c;letter-spacing:0.344px;left:1683.6px;">Clough Ryner</span>
<span class="t" style="top:312px;font-size:13.9px;color:#a6aaae;-webkit-text-stroke:0.15px #a6aaae;letter-spacing:0.328px;left:1684px;">Casper&#x27;s Training LTD</span>
<div class="a" style="left:2095px;top:280.8px;width:162px;height:50px;border:1px solid #dbe0e5;border-radius:5px 0 0 5px;background:#fff;"></div>
<div class="a" style="left:2096px;top:281.8px;width:41px;height:48px;border-right:1px solid #dbe0e5;border-radius:4px 0 0 4px;background:#f2f4f7;"></div>
<span class="t" style="top:297px;font-size:16.8px;color:#4d5761;-webkit-text-stroke:0.18px #4d5761;left:2111.1px;">$</span>
<span class="tt" style="left:2151.4px;top:297px;font-size:16.8px;color:#4d5761;-webkit-text-stroke:0.18px #4d5761;"><span class="d" style="width:6.0px;height:12px;position:relative;"><svg style="left:0;top:0" width="6" height="12" viewBox="0 0 6 12"><path d="M1.25 3.45L4.7 0.75V12" fill="none" stroke="#4d5761" stroke-width="1.45" stroke-linejoin="bevel"/></svg></span><span class="d" style="width:10.3px;">2</span><span class="d" style="width:10.75px;">0</span><span class="d" style="width:10.75px;">0</span></span>
<span class="t" style="top:347px;font-size:16.4px;color:#5a636c;-webkit-text-stroke:0.18px #5a636c;letter-spacing:0.369px;left:1683.6px;">Mr Gerald Ascart</span>
<span class="t" style="top:375px;font-size:13.9px;color:#a6aaae;-webkit-text-stroke:0.15px #a6aaae;letter-spacing:0.328px;left:1684px;">Casper&#x27;s Training LTD</span>
<div class="a" style="left:2095px;top:344.3px;width:162px;height:50px;border:1px solid #dbe0e5;border-radius:5px 0 0 5px;background:#fff;"></div>
<div class="a" style="left:2096px;top:345.3px;width:41px;height:48px;border-right:1px solid #dbe0e5;border-radius:4px 0 0 4px;background:#f2f4f7;"></div>
<span class="t" style="top:361px;font-size:16.8px;color:#4d5761;-webkit-text-stroke:0.18px #4d5761;left:2111.1px;">$</span>
<span class="tt" style="left:2151.4px;top:361px;font-size:16.8px;color:#4d5761;-webkit-text-stroke:0.18px #4d5761;"><span class="d" style="width:10.3px;">8</span><span class="d" style="width:10.4px;">6</span><span class="d" style="width:10.75px;">0</span></span>
<span class="t" style="top:411px;font-size:16.4px;color:#5a636c;-webkit-text-stroke:0.18px #5a636c;letter-spacing:0.417px;left:1683.6px;">Mr Harry Turner</span>
<span class="t" style="top:439px;font-size:13.9px;color:#a6aaae;-webkit-text-stroke:0.15px #a6aaae;letter-spacing:0.328px;left:1684px;">Casper&#x27;s Training LTD</span>
<div class="a" style="left:2095px;top:407.8px;width:162px;height:50px;border:1px solid #dbe0e5;border-radius:5px 0 0 5px;background:#fff;"></div>
<div class="a" style="left:2096px;top:408.8px;width:41px;height:48px;border-right:1px solid #dbe0e5;border-radius:4px 0 0 4px;background:#f2f4f7;"></div>
<span class="t" style="top:424px;font-size:16.8px;color:#4d5761;-webkit-text-stroke:0.18px #4d5761;left:2111.1px;">$</span>
<span class="tt" style="left:2151.4px;top:424px;font-size:16.8px;color:#4d5761;-webkit-text-stroke:0.18px #4d5761;"><span class="d" style="width:9.6px;">7</span><span class="d" style="width:10.75px;">0</span><span class="d" style="width:10.75px;">0</span></span>
<span class="t" style="top:474px;font-size:16.4px;color:#5a636c;-webkit-text-stroke:0.18px #5a636c;letter-spacing:0.398px;left:1683.6px;">Ms Hilda Alan</span>
<span class="t" style="top:502px;font-size:13.9px;color:#a6aaae;-webkit-text-stroke:0.15px #a6aaae;letter-spacing:0.328px;left:1684px;">Casper&#x27;s Training LTD</span>
<div class="a" style="left:2095px;top:471.2px;width:162px;height:50px;border:1px solid #dbe0e5;border-radius:5px 0 0 5px;background:#fff;"></div>
<div class="a" style="left:2096px;top:472.2px;width:41px;height:48px;border-right:1px solid #dbe0e5;border-radius:4px 0 0 4px;background:#f2f4f7;"></div>
<span class="t" style="top:488px;font-size:16.8px;color:#4d5761;-webkit-text-stroke:0.18px #4d5761;left:2111.1px;">$</span>
<span class="tt" style="left:2151.4px;top:488px;font-size:16.8px;color:#4d5761;-webkit-text-stroke:0.18px #4d5761;"><span class="d" style="width:10.3px;">8</span><span class="d" style="width:9.6px;">7</span><span class="d" style="width:9.6px;">5</span></span>
<span class="t" style="top:538px;font-size:16.4px;color:#5a636c;-webkit-text-stroke:0.18px #5a636c;letter-spacing:0.230px;left:1683.6px;">Mr Reyn Christin</span>
<span class="t" style="top:566px;font-size:13.9px;color:#a6aaae;-webkit-text-stroke:0.15px #a6aaae;letter-spacing:0.328px;left:1684px;">Casper&#x27;s Training LTD</span>
<div class="a" style="left:2095px;top:534.7px;width:162px;height:50px;border:1px solid #dbe0e5;border-radius:5px 0 0 5px;background:#fff;"></div>
<div class="a" style="left:2096px;top:535.7px;width:41px;height:48px;border-right:1px solid #dbe0e5;border-radius:4px 0 0 4px;background:#f2f4f7;"></div>
<span class="t" style="top:551px;font-size:16.8px;color:#4d5761;-webkit-text-stroke:0.18px #4d5761;left:2111.1px;">$</span>
<span class="tt" style="left:2151.4px;top:551px;font-size:16.8px;color:#4d5761;-webkit-text-stroke:0.18px #4d5761;"><span class="d" style="width:6.0px;height:12px;position:relative;"><svg style="left:0;top:0" width="6" height="12" viewBox="0 0 6 12"><path d="M1.25 3.45L4.7 0.75V12" fill="none" stroke="#4d5761" stroke-width="1.45" stroke-linejoin="bevel"/></svg></span><span class="d" style="width:10.75px;">0</span><span class="d" style="width:6.0px;height:12px;position:relative;"><svg style="left:0;top:0" width="6" height="12" viewBox="0 0 6 12"><path d="M1.25 3.45L4.7 0.75V12" fill="none" stroke="#4d5761" stroke-width="1.45" stroke-linejoin="bevel"/></svg></span><span class="d" style="width:10.75px;">0</span></span>
<span class="t" style="top:601px;font-size:16.4px;color:#5a636c;-webkit-text-stroke:0.18px #5a636c;letter-spacing:0.248px;left:1683.6px;">Zach Fei</span>
<span class="t" style="top:629px;font-size:13.9px;color:#a6aaae;-webkit-text-stroke:0.15px #a6aaae;letter-spacing:0.328px;left:1684px;">Casper&#x27;s Training LTD</span>
<div class="a" style="left:2095px;top:598.2px;width:162px;height:50px;border:1px solid #dbe0e5;border-radius:5px 0 0 5px;background:#fff;"></div>
<div class="a" style="left:2096px;top:599.2px;width:41px;height:48px;border-right:1px solid #dbe0e5;border-radius:4px 0 0 4px;background:#f2f4f7;"></div>
<span class="t" style="top:615px;font-size:16.8px;color:#4d5761;-webkit-text-stroke:0.18px #4d5761;left:2111.1px;">$</span>
<span class="tt" style="left:2151.4px;top:615px;font-size:16.8px;color:#4d5761;-webkit-text-stroke:0.18px #4d5761;"><span class="d" style="width:6.0px;height:12px;position:relative;"><svg style="left:0;top:0" width="6" height="12" viewBox="0 0 6 12"><path d="M1.25 3.45L4.7 0.75V12" fill="none" stroke="#4d5761" stroke-width="1.45" stroke-linejoin="bevel"/></svg></span><span class="d" style="width:10.75px;">0</span><span class="d" style="width:10.75px;">0</span><span class="d" style="width:10.75px;">0</span></span>
<span class="t" style="top:684px;font-size:16.4px;color:#2d3943;-webkit-text-stroke:0.18px #2d3943;letter-spacing:-0.004px;left:1675.8px;">1 - 8 of</span>
<span class="t" style="top:684px;font-size:16.4px;color:#1b2a35;-webkit-text-stroke:0.46px #1b2a35;left:1731.6px;">8</span>
<span class="t" style="top:684px;font-size:16.4px;color:#2d3943;-webkit-text-stroke:0.18px #2d3943;letter-spacing:0.279px;left:1745.9px;">total results.</span>
<div class="a" style="left:1677px;top:743px;width:80.5px;height:49.6px;border:1px solid #e5e7eb;border-radius:5px;background:#f3f4f6;"></div>
<span class="t" style="top:758px;font-size:16.4px;color:#505a65;-webkit-text-stroke:0.33px #505a65;letter-spacing:0.609px;left:1692.6px;">Import</span>
<div class="a" style="left:1767px;top:743px;width:82px;height:49.6px;border:1px solid #e5e7eb;border-radius:5px;background:#f3f4f6;"></div>
<span class="t" style="top:758px;font-size:16.4px;color:#505a65;-webkit-text-stroke:0.33px #505a65;letter-spacing:0.625px;left:1783.2px;">Export</span>
<div class="a" style="left:2100px;top:743px;width:84.5px;height:49.6px;border:1px solid #e5e7eb;border-radius:5px;background:#f3f4f6;"></div>
<span class="t" style="top:758px;font-size:16.4px;color:#505a65;-webkit-text-stroke:0.33px #505a65;letter-spacing:0.494px;left:2115.6px;">Cancel</span>
<div class="a" style="left:2194px;top:743px;width:70px;height:49.6px;border:1px solid #82abfa;border-radius:5px;background:#82abfa;"></div>
<span class="t" style="top:758px;font-size:16.4px;color:#ffffff;-webkit-text-stroke:0.46px #ffffff;letter-spacing:0.047px;left:2210.3px;">Save</span>
<div class="a" style="left:1763px;top:741px;width:90px;height:54.5px;border:5px solid #dc3a12;border-radius:7.5px;"></div>
<div class="a" style="left:0;top:0;width:2278px;height:1171px;box-shadow:inset 0 0 0 4px #000;pointer-events:none;"></div>
</div>
</body></html>
